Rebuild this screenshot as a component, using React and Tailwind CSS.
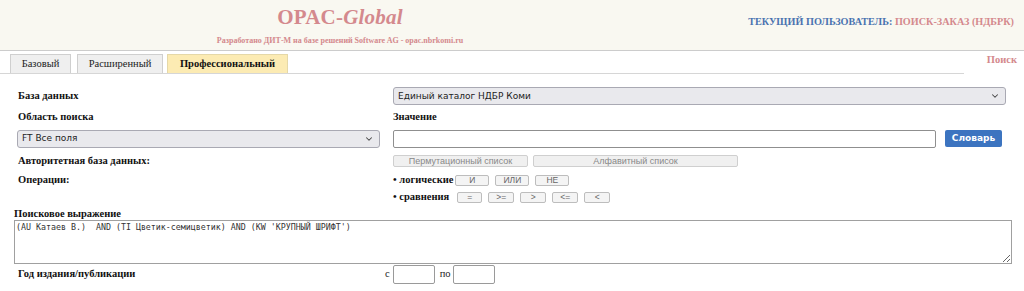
import React from 'react';
import { ChevronDown } from 'lucide-react';

const serif = "font-['Liberation_Serif','Times_New_Roman',serif]";
const sans = "font-['DejaVu_Sans','Verdana',sans-serif]";

const Select = ({ value, className = '' }) => (
    <div className={`relative flex h-[18px] ${className}`}>
        <select
            defaultValue={value}
            className={`block w-full h-[18px] appearance-none bg-[#e9e9ed] border border-[#a9a9b3] rounded-[3px] pl-[4px] text-[9px] leading-none text-[#222] outline-none ${sans}`}
        >
            <option>{value}</option>
        </select>
        <ChevronDown size={10} strokeWidth={2.5} className="absolute right-[6px] top-[4px] text-[#444] pointer-events-none" />
    </div>
);

const GreyButton = ({ children, className = '' }) => (
    <button className={`h-[12px] bg-[#f0f0f0] border border-[#cfcfcf] rounded-[2px] text-[9px] leading-[10px] text-[#888] font-['Liberation_Sans',Arial,sans-serif] ${className}`}>
        {children}
    </button>
);

const OpButton = ({ children, className = '' }) => (
    <button className={`h-[11px] bg-[#f4f4f4] border border-[#bdbdbd] rounded-[2px] text-[8.5px] leading-[9px] text-[#666] font-['Liberation_Sans',Arial,sans-serif] ${className}`}>
        {children}
    </button>
);

const Label = ({ children, className = '' }) => (
    <div className={`text-[10.5px] leading-none font-bold text-[#111] ${serif} ${className}`}>{children}</div>
);

// one form line: left label column + right field column
const Row = ({ h, left, children }) => (
    <div className={`flex items-center ${h}`}>
        <div className="w-[376px] shrink-0 pl-[1px]">{left}</div>
        <div className="flex-1 flex items-center">{children}</div>
    </div>
);

export default function App() {
    return (
        <div className={`w-[1024px] h-[291px] bg-white overflow-hidden leading-none ${serif}`}>
            {/* header */}
            <div className="h-[51px] bg-[#f9f8f1] border-b border-[#cccccc] flex">
                <div className="w-[680px] flex flex-col items-center pt-[7px]">
                    <div className="text-[21px] leading-[21px] font-bold text-[#d4898d] tracking-[0.2px]">
                        OPAC-<i>Global</i>
                    </div>
                    <div className="mt-[8px] text-[8px] leading-[9px] font-bold text-[#d4898d]">
                        Разработано ДИТ-М на базе решений Software AG - opac.nbrkomi.ru
                    </div>
                </div>
                <div className="flex-1 flex justify-end pr-[10px] pt-[17px]">
                    <div className="text-[10.2px] font-bold">
                        <span className="text-[#4a73b0]">ТЕКУЩИЙ ПОЛЬЗОВАТЕЛЬ: </span>
                        <span className="text-[#d4898d]">ПОИСК-ЗАКАЗ (НДБРК)</span>
                    </div>
                </div>
            </div>

            {/* tabs */}
            <div className="flex items-start">
                <div className="w-[964px] h-[23px] flex items-end gap-[5px] pl-[10px] border-b border-[#d6d6d6]">
                    <div className="w-[61px] h-[19px] bg-[#efefef] border border-b-0 border-[#cfcfcf] flex items-center justify-center text-[10.5px] text-[#222]">Базовый</div>
                    <div className="w-[86px] h-[19px] bg-[#efefef] border border-b-0 border-[#cfcfcf] flex items-center justify-center text-[10.5px] text-[#222] ml-[1px]">Расширенный</div>
                    <div className="w-[121px] h-[19px] bg-[#fcebb3] border border-b-0 border-[#e5d8a8] flex items-center justify-center text-[10.5px] font-bold text-[#111] -ml-[1px]">Профессиональный</div>
                </div>
                <div className="flex-1 text-right pr-[7px] pt-[4px] text-[10.5px] font-bold text-[#d4898d]">Поиск</div>
            </div>

            {/* form */}
            <div className="pl-[17px] pr-[18px] pt-[13px]">
                <Row h="h-[18px]" left={<Label>База данных</Label>}>
                    <Select value="Единый каталог НДБР Коми" className="flex-1" />
                </Row>

                <Row h="h-[24px]" left={<Label>Область поиска</Label>}>
                    <Label>Значение</Label>
                </Row>

                <div className="flex items-center h-[19px]">
                    <Select value="FT Все поля" className="w-[363px] shrink-0" />
                    <div className="flex-1 flex items-center gap-[9px] pl-[13px] pr-[4px]">
                        <input className="flex-1 h-[18px] border border-[#8f8f8f] rounded-[2px] bg-white outline-none" />
                        <button className={`w-[57px] h-[17px] bg-[#3c74c0] rounded-[2px] text-white text-[9px] font-bold ${sans}`}>Словарь</button>
                    </div>
                </div>

                <Row h="h-[26px]" left={<Label>Авторитетная база данных:</Label>}>
                    <div className="flex gap-[5px]">
                        <GreyButton className="w-[135px]">Пермутационный список</GreyButton>
                        <GreyButton className="w-[205px]">Алфавитный список</GreyButton>
                    </div>
                </Row>

                <Row h="h-[12px]" left={<Label>Операции:</Label>}>
                    <span className="text-[10.5px] font-bold text-[#111] mr-[2px]">• логические</span>
                    <div className="flex gap-[6px]">
                        <OpButton className="w-[34px]">И</OpButton>
                        <OpButton className="w-[34px]">ИЛИ</OpButton>
                        <OpButton className="w-[34px]">НЕ</OpButton>
                    </div>
                </Row>

                <Row h="h-[22px]" left={null}>
                    <span className="text-[10.5px] font-bold text-[#111] mr-[8px]">• сравнения</span>
                    <div className="flex gap-[6px]">
                        <OpButton className="w-[25px]">=</OpButton>
                        <OpButton className="w-[26px]">&gt;=</OpButton>
                        <OpButton className="w-[26px]">&gt;</OpButton>
                        <OpButton className="w-[26px]">&lt;=</OpButton>
                        <OpButton className="w-[26px]">&lt;</OpButton>
                    </div>
                </Row>

                <div className="-ml-[3px] -mr-[6px]">
                    <div className="h-[12px] flex items-center">
                        <Label>Поисковое выражение</Label>
                    </div>
                    <textarea
                        defaultValue="(AU Катаев В.)  AND (TI Цветик-семицветик) AND (KW 'КРУПНЫЙ ШРИФТ')"
                        className="block w-full h-[44px] border border-[#a0a0a0] px-[1px] pt-[1px] pb-0 text-[8.3px] leading-[10px] text-[#333] font-['DejaVu_Sans_Mono','Liberation_Mono',monospace] outline-none resize-y"
                    />
                </div>

                <div className="flex items-center h-[21px]">
                    <div className="w-[368px] shrink-0 pl-[1px]">
                        <Label>Год издания/публикации</Label>
                    </div>
                    <div className="flex items-center text-[10.5px] text-[#222]">
                        <span className="mr-[3px]">с</span>
                        <input className="w-[42px] h-[19px] border border-[#9a9a9a] rounded-[2px] bg-white outline-none" />
                        <span className="ml-[5px] mr-[2px]">по</span>
                        <input className="w-[42px] h-[19px] border border-[#9a9a9a] rounded-[2px] bg-white outline-none" />
                    </div>
                </div>
            </div>
        </div>
    );
}
